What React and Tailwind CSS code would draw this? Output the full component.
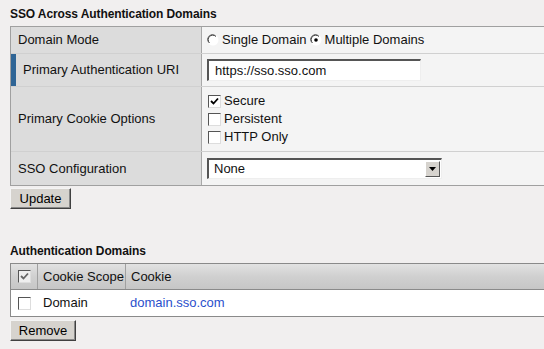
import React from "react";

const font = { fontFamily: '"Liberation Sans", Arial, sans-serif' };

function Radio({ checked }) {
  return (
    <svg width="12" height="12" viewBox="0 0 12 12" className="shrink-0">
      <circle cx="6" cy="6" r="5.5" fill="#fff" />
      <path d="M1.5 8.5 A5 5 0 0 1 8.5 1.5" stroke="#808080" strokeWidth="1" fill="none" />
      <path d="M2.5 8.9 A4 4 0 0 1 8.9 2.5" stroke="#404040" strokeWidth="1" fill="none" />
      {checked && <circle cx="6" cy="6" r="1.8" fill="#000" />}
    </svg>
  );
}

function Check({ checked, gray }) {
  return (
    <span className={`inline-flex h-[13px] w-[13px] shrink-0 items-center justify-center border-t border-l border-t-[#555] border-l-[#555] border-b border-r border-b-[#ddd] border-r-[#ddd] ${gray ? "bg-[#eee]" : "bg-white"}`}>
      {checked && (
        <svg width="9" height="9" viewBox="0 0 9 9">
          <path d="M1 4 L3.5 6.5 L8 1.5" stroke={gray ? "#666" : "#000"} strokeWidth="1.8" fill="none" />
        </svg>
      )}
    </span>
  );
}

function Button({ children, w }) {
  return (
    <div className={`flex h-[21px] ${w} items-center justify-center border border-t-[#f4f4f4] border-l-[#f4f4f4] border-r-[#404040] border-b-[#404040] bg-[#d6d3ce] text-[13px] text-black shadow-[inset_-1px_-1px_0_#888]`}>
      {children}
    </div>
  );
}

export default function App() {
  return (
    <div style={font} className="h-[349px] w-[544px] overflow-hidden bg-[#f1efef] text-[13px] text-[#111]">
      <div className="pl-[10px] pt-[7px] text-[12px] font-bold leading-[15px] tracking-[-0.1px]">SSO Across Authentication Domains</div>
      <div className="ml-[10px] mt-[4px] border-t border-l border-b border-[#a0a0a0]">
        {/* Row 1 */}
        <div className="flex h-[27px] border-b border-[#d0d0d0]">
          <div className="flex w-[191px] items-center border-r border-[#a8a8a8] bg-[#dcdcdc] pl-[7px]">Domain Mode</div>
          <div className="flex flex-1 items-center gap-[3px] bg-[#f4f4f4] pl-[5px]">
            <Radio />
            <span>Single Domain</span>
            <Radio checked />
            <span>Multiple Domains</span>
          </div>
        </div>
        {/* Row 2 */}
        <div className="flex h-[33px] border-b border-[#d0d0d0]">
          <div className="flex w-[191px] items-center border-r border-[#a8a8a8] bg-[#dcdcdc]">
            <div className="h-full w-[5px] bg-[#2f6596]" />
            <span className="pl-[7px]">Primary Authentication URI</span>
          </div>
          <div className="flex flex-1 items-center bg-[#f4f4f4] pl-[5px]">
            <div className="flex h-[22px] w-[214px] items-center border-t-2 border-l-2 border-t-[#555] border-l-[#555] border-r border-b border-r-[#eee] border-b-[#eee] bg-white pl-[6px]">https://sso.sso.com</div>
          </div>
        </div>
        {/* Row 3 */}
        <div className="flex h-[65px] border-b border-[#d0d0d0]">
          <div className="flex w-[191px] items-center border-r border-[#a8a8a8] bg-[#dcdcdc] pl-[7px]">Primary Cookie Options</div>
          <div className="flex flex-1 flex-col justify-center gap-[4px] bg-[#f4f4f4] pl-[6px] leading-[14px]">
            <div className="flex items-center gap-[3px]"><Check checked /><span>Secure</span></div>
            <div className="flex items-center gap-[3px]"><Check /><span>Persistent</span></div>
            <div className="flex items-center gap-[3px]"><Check /><span>HTTP Only</span></div>
          </div>
        </div>
        {/* Row 4 */}
        <div className="flex h-[33px]">
          <div className="flex w-[191px] items-center border-r border-[#a8a8a8] bg-[#dcdcdc] pl-[7px]">SSO Configuration</div>
          <div className="flex flex-1 items-center bg-[#f4f4f4] pl-[5px]">
            <div className="flex h-[21px] w-[235px] items-center justify-between border-t-2 border-l-2 border-t-[#555] border-l-[#555] border-r border-b border-r-[#eee] border-b-[#eee] bg-white pl-[5px] pr-[1px]">
              <span>None</span>
              <div className="flex h-[16px] w-[15px] items-center justify-center border border-t-[#fff] border-l-[#fff] border-r-[#555] border-b-[#555] bg-[#d6d3ce]">
                <svg width="7" height="4" viewBox="0 0 7 4"><path d="M0 0 H7 L3.5 4 Z" fill="#000" /></svg>
              </div>
            </div>
          </div>
        </div>
      </div>
      <div className="pl-[10px] pt-[2px]">
        <Button w="w-[61px]">Update</Button>
      </div>

      <div className="pl-[10px] pt-[35px] text-[12px] font-bold leading-[15px] tracking-[-0.1px]">Authentication Domains</div>
      <div className="ml-[10px] mt-[4px] border-t border-l border-b border-[#8a8a8a]">
        <div className="flex h-[26px] border-b border-[#8a8a8a] bg-gradient-to-b from-[#e2e2e2] via-[#d0d0d0] to-[#c6c6c6]">
          <div className="flex w-[27px] items-center justify-center border-r border-[#a0a0a0]"><Check checked gray /></div>
          <div className="flex w-[88px] items-center border-r border-[#a0a0a0] pl-[5px]">Cookie Scope</div>
          <div className="flex flex-1 items-center pl-[5px]">Cookie</div>
        </div>
        <div className="flex h-[26px] bg-white">
          <div className="flex w-[27px] items-center justify-center"><Check /></div>
          <div className="flex w-[88px] items-center pl-[5px]">Domain</div>
          <div className="flex flex-1 items-center pl-[4px] text-[#2a4fcc]">domain.sso.com</div>
        </div>
      </div>
      <div className="pl-[10px] pt-[3px]">
        <Button w="w-[66px]">Remove</Button>
      </div>
    </div>
  );
}
